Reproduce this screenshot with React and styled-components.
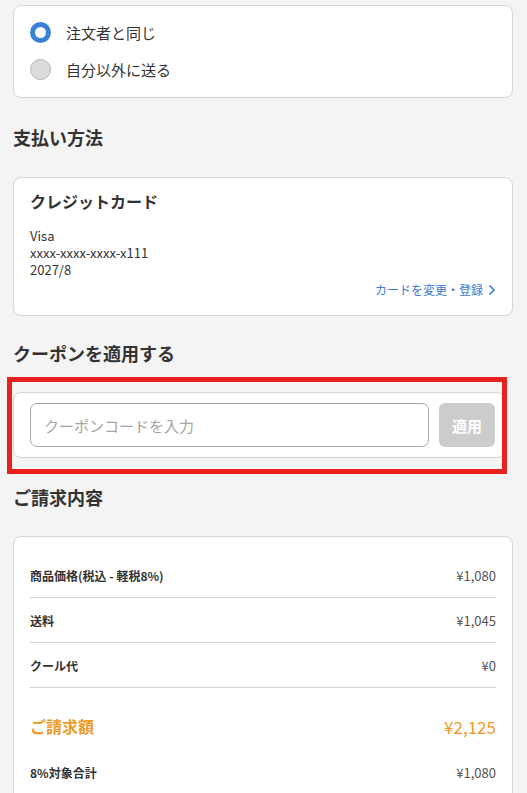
import styled, { createGlobalStyle } from "styled-components";

const GlobalStyle = createGlobalStyle`
  html, body {
    margin: 0;
    padding: 0;
    background: #f4f4f4;
  }
  body {
    font-family: "Noto Sans CJK JP", "Noto Sans", sans-serif;
    color: #333;
  }
`;

const Page = styled.div`
  padding: 5px 14px 40px 13px;
  box-sizing: border-box;
  width: 527px;
`;

const Card = styled.div`
  background: #fff;
  border: 1px solid #d6d6d6;
  border-radius: 8px;
  box-sizing: border-box;
  padding: ${(p) => p.$pad || "16px"};
  margin-right: ${(p) => p.$trim || 0}px;
`;

const SectionTitle = styled.h2`
  margin: 0;
  font-size: 18px;
  font-weight: 700;
  line-height: 26px;
  color: #333;
  padding: ${(p) => p.$pad || "26px 0 25px"};
`;

const RadioList = styled.div`
  display: flex;
  flex-direction: column;
  gap: 16px;
`;

const RadioRow = styled.label`
  display: flex;
  align-items: center;
  gap: 15px;
  font-size: 15px;
  line-height: 21px;
  color: #333;
`;

const RadioDot = styled.span`
  width: 21px;
  height: 21px;
  border-radius: 50%;
  box-sizing: border-box;
  flex-shrink: 0;
  background: ${(p) => (p.$checked ? "#fff" : "#dcdcdc")};
  border: ${(p) => (p.$checked ? "5px solid #3a82d8" : "1px solid #b5b5b5")};
`;

const CardTitle = styled.div`
  font-size: 16px;
  font-weight: 700;
  line-height: 22px;
  margin-bottom: 15px;
`;

const CardInfo = styled.div`
  font-size: 13px;
  line-height: 17px;
  color: #333;
`;

const LinkRow = styled.div`
  display: flex;
  justify-content: flex-end;
  margin-top: 3px;
`;

const ChangeLink = styled.a`
  display: inline-flex;
  align-items: center;
  gap: 5px;
  font-size: 12px;
  line-height: 18px;
  color: #3a7bd5;
  text-decoration: none;
`;

const CouponWrap = styled.div`
  position: relative;
  margin-top: 26px;
`;

/* red frame drawn over the coupon card */
const Highlight = styled.div`
  position: absolute;
  left: -6px;
  right: 6px;
  top: -15px;
  bottom: -16px;
  border: 5px solid #e82020;
  pointer-events: none;
`;

const CouponRow = styled.div`
  display: flex;
  gap: 10px;
  align-items: center;
`;

const CouponInput = styled.input`
  flex: 1;
  height: 44px;
  box-sizing: border-box;
  border: 1px solid #a8a8a8;
  border-radius: 7px;
  padding: 0 13px;
  font-family: inherit;
  font-size: 15px;
  color: #333;
  outline: none;

  &::placeholder {
    color: #a4a4a4;
  }
`;

const ApplyButton = styled.button`
  width: 56px;
  height: 44px;
  border: none;
  border-radius: 6px;
  background: #cccccc;
  color: #fff;
  font-family: inherit;
  font-size: 15px;
  font-weight: 700;
`;

const SummaryRow = styled.div`
  display: flex;
  justify-content: space-between;
  align-items: center;
  height: ${(p) => p.$h || 44}px;
  border-bottom: ${(p) => (p.$line ? "1px solid #d3d3d3" : "none")};
`;

const RowLabel = styled.span`
  font-size: ${(p) => (p.$total ? 16 : 12)}px;
  font-weight: 700;
  color: ${(p) => (p.$total ? "#f09a27" : "#333")};
`;

const RowValue = styled.span`
  font-size: ${(p) => (p.$total ? 17 : 13)}px;
  color: ${(p) => (p.$total ? "#f09a27" : "#555")};
`;

const Chevron = () => (
  <svg width="8" height="12" viewBox="0 0 8 12" fill="none">
    <path d="M1.5 1.5L6 6l-4.5 4.5" stroke="#3a7bd5" strokeWidth="1.6" />
  </svg>
);

const summary = [
  { label: "商品価格(税込 - 軽税8%)", value: "¥1,080" },
  { label: "送料", value: "¥1,045" },
  { label: "クール代", value: "¥0" },
];

export default function App() {
  return (
    <>
      <GlobalStyle />
      <Page>
        <Card $pad="16px 16px 17px">
          <RadioList>
            <RadioRow>
              <RadioDot $checked />
              注文者と同じ
            </RadioRow>
            <RadioRow>
              <RadioDot />
              自分以外に送る
            </RadioRow>
          </RadioList>
        </Card>

        <SectionTitle $pad="26px 0 27px">支払い方法</SectionTitle>
        <Card $pad="12px 16px 16px">
          <CardTitle>クレジットカード</CardTitle>
          <CardInfo>Visa</CardInfo>
          <CardInfo>xxxx-xxxx-xxxx-x111</CardInfo>
          <CardInfo>2027/8</CardInfo>
          <LinkRow>
            <ChangeLink href="#">
              カードを変更・登録
              <Chevron />
            </ChangeLink>
          </LinkRow>
        </Card>

        <SectionTitle $pad="24px 0 0">クーポンを適用する</SectionTitle>
        <CouponWrap>
          <Card $pad="10px 9px 10px 16px" $trim={8}>
            <CouponRow>
              <CouponInput placeholder="クーポンコードを入力" />
              <ApplyButton>適用</ApplyButton>
            </CouponRow>
          </Card>
          <Highlight />
        </CouponWrap>

        <SectionTitle $pad="26px 0 26px">ご請求内容</SectionTitle>
        <Card $pad="16px 16px 0">
          {summary.map((row) => (
            <SummaryRow key={row.label} $line>
              <RowLabel>{row.label}</RowLabel>
              <RowValue>{row.value}</RowValue>
            </SummaryRow>
          ))}
          <SummaryRow $h={76}>
            <RowLabel $total>ご請求額</RowLabel>
            <RowValue $total>¥2,125</RowValue>
          </SummaryRow>
          <SummaryRow $h={16}>
            <RowLabel>8%対象合計</RowLabel>
            <RowValue>¥1,080</RowValue>
          </SummaryRow>
          <SummaryRow $h={30} />
        </Card>
      </Page>
    </>
  );
}
